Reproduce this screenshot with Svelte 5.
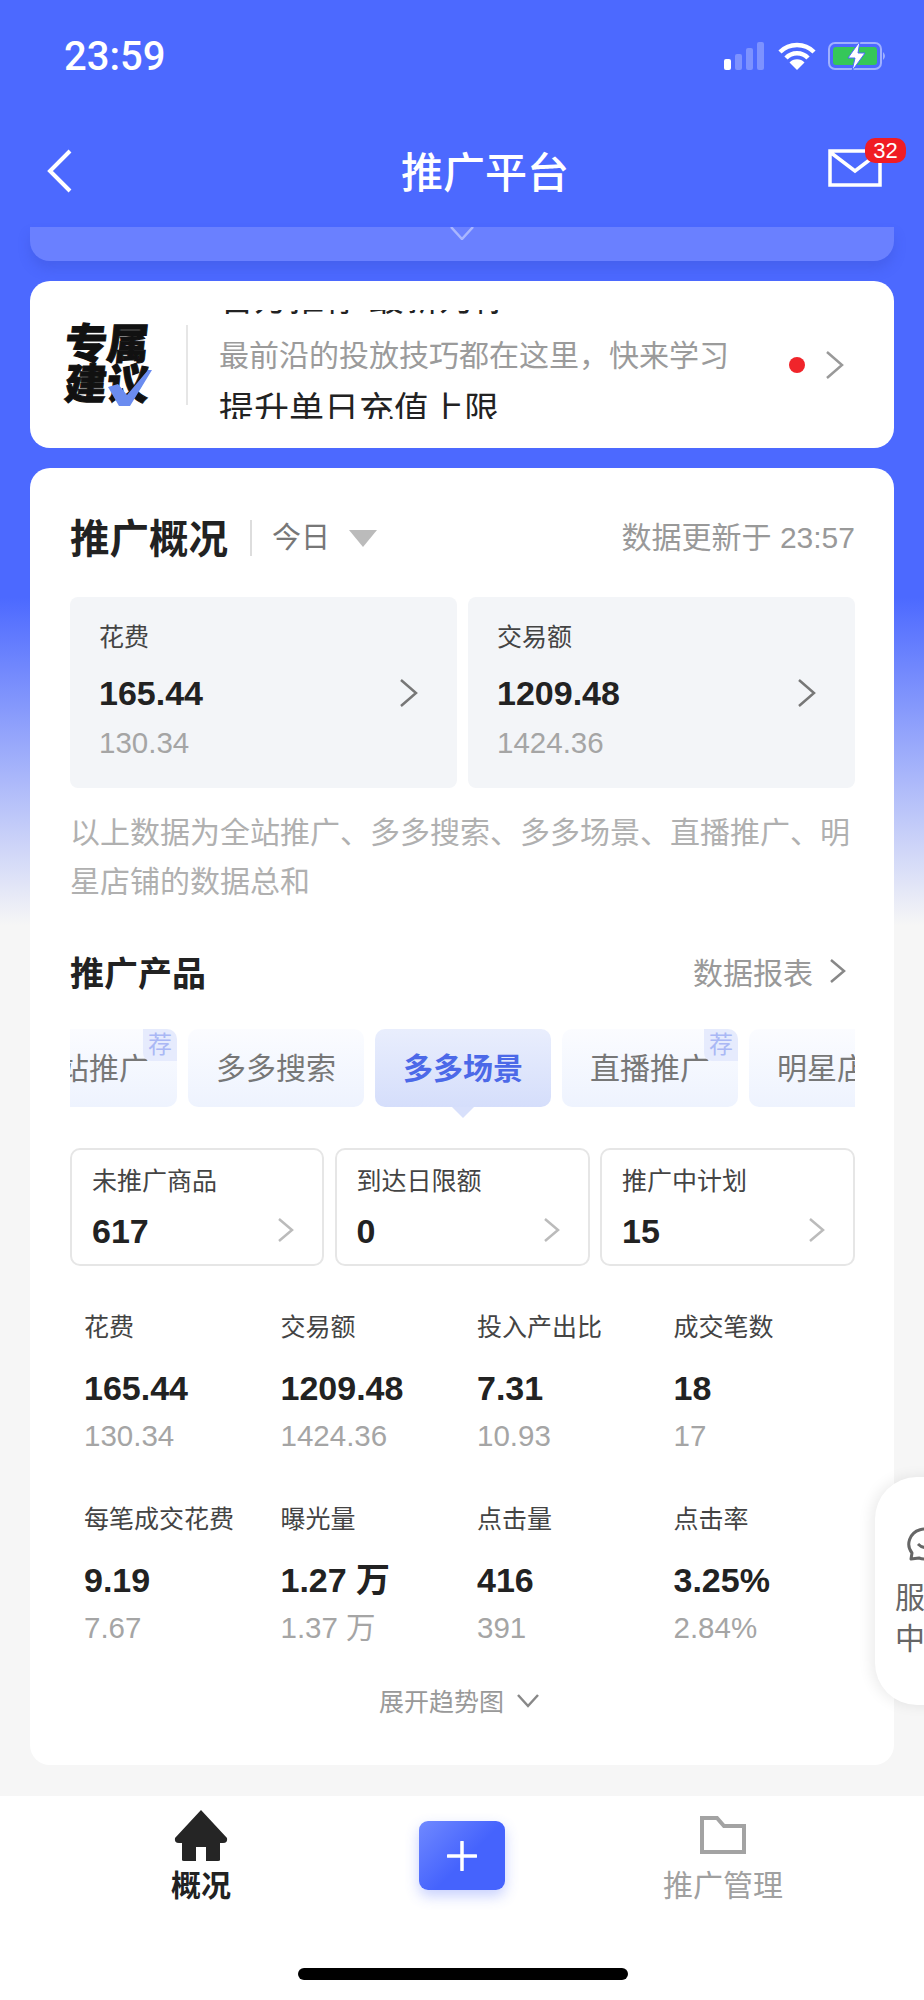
<script>
	const tiles = [
		{ label: '花费', value: '165.44', sub: '130.34' },
		{ label: '交易额', value: '1209.48', sub: '1424.36' }
	];
	const tabs = [
		{ name: '全站推广', rec: true },
		{ name: '多多搜索' },
		{ name: '多多场景', active: true },
		{ name: '直播推广', rec: true },
		{ name: '明星店铺' }
	];
	const stats = [
		{ label: '未推广商品', value: '617' },
		{ label: '到达日限额', value: '0' },
		{ label: '推广中计划', value: '15' }
	];
	const metrics = [
		{ label: '花费', value: '165.44', sub: '130.34' },
		{ label: '交易额', value: '1209.48', sub: '1424.36' },
		{ label: '投入产出比', value: '7.31', sub: '10.93' },
		{ label: '成交笔数', value: '18', sub: '17' },
		{ label: '每笔成交花费', value: '9.19', sub: '7.67' },
		{ label: '曝光量', value: '1.27 万', sub: '1.37 万' },
		{ label: '点击量', value: '416', sub: '391' },
		{ label: '点击率', value: '3.25%', sub: '2.84%' }
	];
</script>

<div class="page">
	<div class="hero"></div>

	<header class="status">
		<span class="time">23:59</span>
		<div class="status_icons">
			<svg width="42" height="28" viewBox="0 0 42 28">
				<rect x="0" y="17" width="7" height="11" rx="2" fill="#fff" />
				<rect x="11" y="12" width="7" height="16" rx="2" fill="#7d92ff" />
				<rect x="22" y="6" width="7" height="22" rx="2" fill="#7d92ff" />
				<rect x="33" y="0" width="7" height="28" rx="2" fill="#7d92ff" />
			</svg>
			<svg width="38" height="28" viewBox="0 0 38 28">
				<path d="M2 10 A24 24 0 0 1 36 10 M8 16 A15 15 0 0 1 30 16" fill="none" stroke="#fff" stroke-width="4.5" />
				<path d="M19 28 L11.5 20.5 A10.5 10.5 0 0 1 26.5 20.5 Z" fill="#fff" />
			</svg>
			<svg width="60" height="30" viewBox="0 0 60 30">
				<rect x="1" y="2" width="52" height="26" rx="6" fill="none" stroke="#9fb0ff" stroke-width="2" />
				<rect x="5" y="6" width="44" height="18" rx="3" fill="#35c759" />
				<path d="M55 11 q4 4 0 8 z" fill="#9fb0ff" />
				<path d="M32 0 L20 17 H27 L24 30 L37 12 H30 Z" fill="#fff" stroke="#4c69ff" stroke-width="1" />
			</svg>
		</div>
	</header>

	<nav class="navbar">
		<svg class="back" width="26" height="44" viewBox="0 0 26 44">
			<path d="M24 2 L4 22 L24 42" fill="none" stroke="#fff" stroke-width="4" />
		</svg>
		<h1>推广平台</h1>
		<div class="mail">
			<svg width="54" height="38" viewBox="0 0 54 38">
				<path d="M2 2 H52 V36 H2 Z M2 3 L27 22 L52 3" fill="none" stroke="#fff" stroke-width="3.5" />
			</svg>
			<span class="badge">32</span>
		</div>
	</nav>

	<div class="strip">
		<svg width="24" height="13" viewBox="0 0 24 13">
			<path d="M1 0 L12 12 L23 0" fill="none" stroke="#a9b6ff" stroke-width="2.5" />
		</svg>
	</div>

	<section class="card advice">
		<div class="logo">
			<span>专属</span>
			<span>建议</span>
			<svg class="tick" width="44" height="36" viewBox="0 0 44 36">
				<path d="M0 17 L10 14 L19 25 L40 0 L44 0 L22 36 L11 36 Z" fill="#6b8cf0" />
			</svg>
		</div>
		<div class="advice_lines">
			<p class="line_top">官方推荐 最新为你</p>
			<p class="line_mid">最前沿的投放技巧都在这里，快来学习</p>
			<p class="line_low">提升单日充值上限</p>
		</div>
		<i class="dot"></i>
		<svg class="chev" width="20" height="30" viewBox="0 0 20 30">
			<path d="M2 2 L17 15 L2 28" fill="none" stroke="#999" stroke-width="2.5" />
		</svg>
	</section>

	<section class="card overview">
		<div class="overview_head">
			<h2>推广概况</h2>
			<span class="range">今日</span>
			<i class="caret"></i>
			<span class="updated">数据更新于 23:57</span>
		</div>

		<div class="tiles">
			{#each tiles as t}
				<div class="tile">
					<div class="tile_label">{t.label}</div>
					<div class="tile_value">{t.value}</div>
					<div class="tile_sub">{t.sub}</div>
					<svg class="tile_chev" width="20" height="30" viewBox="0 0 20 30">
						<path d="M2 2 L17 15 L2 28" fill="none" stroke="#777" stroke-width="2.5" />
					</svg>
				</div>
			{/each}
		</div>

		<p class="note">以上数据为全站推广、多多搜索、多多场景、直播推广、明星店铺的数据总和</p>

		<div class="product_head">
			<h3>推广产品</h3>
			<span class="report">数据报表</span>
			<svg width="18" height="26" viewBox="0 0 18 26">
				<path d="M2 2 L15 13 L2 24" fill="none" stroke="#888" stroke-width="2.5" />
			</svg>
		</div>

		<div class="tabs_clip">
			<div class="tabs">
				{#each tabs as tab}
					<div class="tab" class:active={tab.active}>
						{tab.name}
						{#if tab.rec}<span class="rec">荐</span>{/if}
					</div>
				{/each}
			</div>
		</div>

		<div class="stats">
			{#each stats as s}
				<div class="stat">
					<div class="stat_label">{s.label}</div>
					<div class="stat_value">{s.value}</div>
					<svg class="stat_chev" width="17" height="26" viewBox="0 0 17 26">
						<path d="M2 2 L15 13 L2 24" fill="none" stroke="#bbb" stroke-width="2.5" />
					</svg>
				</div>
			{/each}
		</div>

		<div class="metrics">
			{#each metrics as m}
				<div class="metric">
					<div class="metric_label">{m.label}</div>
					<div class="metric_value">{m.value}</div>
					<div class="metric_sub">{m.sub}</div>
				</div>
			{/each}
		</div>

		<div class="expand">
			<span>展开趋势图</span>
			<svg width="24" height="15" viewBox="0 0 24 15">
				<path d="M2 2 L12 13 L22 2" fill="none" stroke="#888" stroke-width="2.5" />
			</svg>
		</div>
	</section>

	<aside class="service">
		<svg width="40" height="36" viewBox="0 0 40 36">
			<path d="M6 32 L7 26 A16 15 0 1 1 14 31 Z" fill="none" stroke="#666" stroke-width="3" stroke-linejoin="round" />
			<path d="M13 17 Q20 24 28 17" fill="none" stroke="#666" stroke-width="3" />
		</svg>
		<span>服务<br />中心</span>
	</aside>

	<footer class="tabbar">
		<div class="tabbar_item on">
			<svg width="56" height="52" viewBox="0 0 56 52">
				<path d="M28 0 L54 28 Q55 33 50 33 H47 V50 Q47 51 45 51 H33 V37 H23 V51 H11 Q9 51 9 50 V33 H6 Q1 33 2 28 Z" fill="#252525" />
			</svg>
			<span>概况</span>
		</div>
		<div class="plus">
			<svg width="30" height="30" viewBox="0 0 30 30">
				<path d="M15 1 V29 M1 15 H29" stroke="#fff" stroke-width="3.5" stroke-linecap="round" />
			</svg>
		</div>
		<div class="tabbar_item">
			<svg width="48" height="40" viewBox="0 0 48 40">
				<path d="M3 2 H18 L25 10 H45 V36 H3 Z" fill="none" stroke="#a3a3a3" stroke-width="4" />
			</svg>
			<span>推广管理</span>
		</div>
		<div class="home_bar"></div>
	</footer>
</div>

<style>
	:global(body) {
		margin: 0;
		background: #f6f6f6;
	}

	.page {
		position: relative;
		width: 924px;
		height: 2000px;
		overflow: hidden;
		background: #f6f6f6;
		font-family: "Liberation Sans", "Noto Sans CJK SC", sans-serif;
		color: #222;
	}

	.hero {
		position: absolute;
		inset: 0 0 auto 0;
		height: 930px;
		background: linear-gradient(#4c69ff 0, #4c69ff 597px, #f6f6f6 925px);
	}

	p, h1, h2, h3 {
		margin: 0;
		font-weight: inherit;
	}

	/* status bar */
	.status {
		position: relative;
		display: flex;
		justify-content: space-between;
		align-items: center;
		height: 112px;
		padding: 0 36px 0 64px;
		box-sizing: border-box;
		color: #fff;
	}

	.time {
		font-family: Roboto, sans-serif;
		font-size: 40px;
		font-weight: 500;
	}

	.status_icons {
		display: flex;
		align-items: center;
		gap: 12px;
	}

	/* nav */
	.navbar {
		position: relative;
		display: flex;
		align-items: center;
		justify-content: center;
		height: 115px;
		padding-left: 46px;
		color: #fff;
	}

	.navbar h1 {
		font-size: 42px;
		font-weight: 500;
	}

	.back {
		position: absolute;
		left: 46px;
		top: 37px;
	}

	.mail {
		position: absolute;
		left: 828px;
		top: 37px;
	}

	.mail svg {
		display: block;
	}

	.badge {
		position: absolute;
		left: 37px;
		top: -11px;
		width: 41px;
		height: 25px;
		border-radius: 10px;
		background: #f01c24;
		color: #fff;
		font-size: 22px;
		line-height: 25px;
		text-align: center;
	}

	.strip {
		position: relative;
		display: flex;
		justify-content: center;
		align-items: flex-start;
		height: 34px;
		margin: 0 30px;
		background: #6a80ff;
		border-radius: 0 0 20px 20px;
		box-shadow: 0 8px 12px rgba(50, 70, 190, 0.25);
	}

	.card {
		position: relative;
		margin: 0 30px;
		background: #fff;
		border-radius: 20px;
	}

	/* advice */
	.advice {
		display: flex;
		align-items: center;
		height: 167px;
		margin-top: 20px;
	}

	.logo {
		position: relative;
		display: flex;
		flex-direction: column;
		align-items: center;
		width: 85px;
		margin-left: 35px;
		padding-right: 36px;
		border-right: 2px solid #e6e6e6;
		font-size: 42px;
		font-weight: 900;
		line-height: 40px;
		color: #111;
		white-space: nowrap;
		-webkit-text-stroke: 1px #111;
	}

	.logo span {
		transform: skewX(-6deg);
	}

	.tick {
		position: absolute;
		left: 43px;
		top: 45px;
	}

	.advice_lines {
		width: 530px;
		height: 109px;
		margin-left: 31px;
		overflow: hidden;
		white-space: nowrap;
	}

	.line_top, .line_low {
		font-size: 35px;
		line-height: 46px;
		color: #222;
	}

	.line_top {
		margin-top: -34px;
	}

	.line_mid {
		margin-top: 3px;
		font-size: 30px;
		line-height: 62px;
		color: #9b9b9b;
	}

	.dot {
		width: 16px;
		height: 16px;
		margin-left: 40px;
		border-radius: 50%;
		background: #f0242a;
	}

	.chev {
		margin-left: 20px;
	}

	/* overview */
	.overview {
		height: 1297px;
		margin-top: 20px;
		padding: 0 39px 0 40px;
		box-sizing: border-box;
	}

	.overview_head {
		display: flex;
		align-items: center;
		height: 129px;
		padding-top: 11px;
		box-sizing: border-box;
	}

	.overview_head h2 {
		margin-top: -5px;
		padding-right: 22px;
		font-size: 39.5px;
		font-weight: 700;
	}

	.range {
		padding-left: 20px;
		border-left: 2px solid #ddd;
		font-size: 29px;
		line-height: 36px;
		color: #777;
	}

	.caret {
		margin-left: 19px;
		border-top: 17px solid #bbb;
		border-left: 14px solid transparent;
		border-right: 14px solid transparent;
	}

	.updated {
		margin-left: auto;
		margin-top: -6px;
		font-size: 30px;
		color: #999;
	}

	.tiles {
		display: grid;
		grid-template-columns: 387px 387px;
		gap: 11px;
	}

	.tile {
		position: relative;
		height: 191px;
		padding: 25px 29px;
		box-sizing: border-box;
		border-radius: 8px;
		background: #f3f5f8;
	}

	.tile_label {
		font-size: 25px;
		line-height: 30px;
		color: #444;
	}

	.tile_value {
		margin-top: 21px;
		font-size: 34px;
		line-height: 40px;
		font-weight: 700;
	}

	.tile_sub {
		margin-top: 12px;
		font-size: 29.5px;
		line-height: 36px;
		color: #a5a5a5;
	}

	.tile_chev {
		position: absolute;
		right: 38px;
		top: 81px;
	}

	.note {
		margin-top: 20px;
		font-size: 30px;
		line-height: 49px;
		color: #b0b0b0;
	}

	.product_head {
		display: flex;
		align-items: center;
		gap: 16px;
		height: 44px;
		margin-top: 43px;
		padding-right: 8px;
	}

	.product_head h3 {
		margin-right: auto;
		font-size: 34px;
		font-weight: 700;
	}

	.report {
		font-size: 30px;
		color: #999;
	}

	.tabs_clip {
		height: 90px;
		margin-top: 36px;
		overflow: hidden;
	}

	.tabs {
		display: flex;
		gap: 11px;
		margin-left: -69px;
	}

	.tab {
		position: relative;
		flex: none;
		width: 176px;
		height: 78px;
		border-radius: 10px;
		background: linear-gradient(#fbfcff, #eef3fe);
		font-size: 30px;
		line-height: 79px;
		text-align: center;
		color: #777;
	}

	.tab.active {
		background: linear-gradient(#e9eefd, #d5defb);
		color: #4c69e8;
		font-weight: 700;
	}

	.tab.active::after {
		content: "";
		position: absolute;
		left: 77px;
		top: 78px;
		border-top: 11px solid #d8e0fb;
		border-left: 11px solid transparent;
		border-right: 11px solid transparent;
	}

	.rec {
		position: absolute;
		right: 0;
		top: 0;
		width: 34px;
		height: 32px;
		border-radius: 0 10px 0 8px;
		background: #e6ebfd;
		font-size: 24px;
		line-height: 32px;
		color: #aab8f5;
	}

	.stats {
		display: grid;
		grid-template-columns: 254px 255px 255px;
		gap: 10.5px;
		margin-top: 29px;
	}

	.stat {
		position: relative;
		height: 118px;
		padding: 16px 20px;
		box-sizing: border-box;
		border: 2px solid #e6e6e6;
		border-radius: 10px;
	}

	.stat_label {
		font-size: 25px;
		line-height: 30px;
		color: #444;
	}

	.stat_value {
		margin-top: 15px;
		font-size: 34px;
		line-height: 40px;
		font-weight: 700;
	}

	.stat_chev {
		position: absolute;
		right: 28px;
		top: 67px;
	}

	.metrics {
		display: grid;
		grid-template-columns: repeat(4, 196.5px);
		row-gap: 50px;
		margin-top: 46px;
		padding-left: 14px;
	}

	.metric_label {
		font-size: 25px;
		line-height: 30px;
		color: #444;
		white-space: nowrap;
	}

	.metric_value {
		margin-top: 26px;
		font-size: 34px;
		line-height: 40px;
		font-weight: 700;
	}

	.metric_sub {
		margin-top: 10px;
		font-size: 29.5px;
		line-height: 36px;
		color: #a5a5a5;
	}

	.expand {
		display: flex;
		justify-content: center;
		align-items: center;
		gap: 12px;
		margin-top: 36px;
		padding-right: 6px;
		font-size: 25px;
		color: #999;
	}

	/* floating service tab */
	.service {
		position: absolute;
		left: 875px;
		top: 1477px;
		display: flex;
		flex-direction: column;
		align-items: center;
		width: 100px;
		height: 228px;
		padding-top: 50px;
		box-sizing: border-box;
		border-radius: 42px 0 0 42px;
		background: #fff;
		box-shadow: -4px 0 14px rgba(0, 0, 0, 0.08);
		font-size: 30px;
		line-height: 41px;
		color: #666;
	}

	.service svg {
		margin-bottom: 14px;
	}

	/* bottom bar */
	.tabbar {
		position: absolute;
		left: 0;
		right: 0;
		bottom: 0;
		height: 204px;
		background: #fff;
	}

	.tabbar_item {
		position: absolute;
		top: 14px;
		display: flex;
		flex-direction: column;
		align-items: center;
		font-size: 30px;
		line-height: 36px;
		color: #a0a0a0;
	}

	.tabbar_item:first-child {
		left: 171px;
		color: #222;
		font-weight: 700;
	}

	.tabbar_item:first-child span {
		margin-top: 6px;
	}

	.tabbar_item:nth-child(3) {
		left: 663px;
		top: 20px;
	}

	.tabbar_item:nth-child(3) span {
		margin-top: 12px;
	}

	.plus {
		position: absolute;
		left: 419px;
		top: 25px;
		display: flex;
		align-items: center;
		justify-content: center;
		width: 86px;
		height: 69px;
		border-radius: 9px;
		background: linear-gradient(135deg, #7089ff, #4563fd 55%);
		box-shadow: 0 6px 14px rgba(69, 99, 253, 0.3);
	}

	.home_bar {
		position: absolute;
		left: 298px;
		top: 172px;
		width: 330px;
		height: 12px;
		border-radius: 6px;
		background: #000;
	}
</style>
